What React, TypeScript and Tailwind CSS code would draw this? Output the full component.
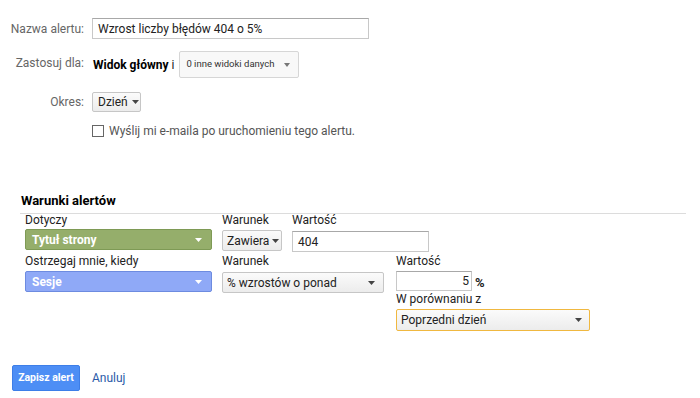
import React from "react";

const Caret = ({ color = "#444", w = 7 }: { color?: string; w?: number }) => (
  <svg width={w} height="4" viewBox="0 0 7 4" preserveAspectRatio="none" className="shrink-0">
    <polygon points="0,0 7,0 3.5,4" fill={color} />
  </svg>
);

const App = () => {
  return (
    <div className="w-[700px] h-[398px] bg-white font-[Roboto,Arial,sans-serif] text-[12px] text-[#222] overflow-hidden">
      {/* top form */}
      <div className="pt-[18px]">
        <div className="flex items-center h-[21px]">
          <div className="w-[84px] text-right text-[#666] mr-[8px]">Nazwa alertu:</div>
          <div className="w-[277px] h-[21px] border border-[#c8c8c8] border-t-[#a8a8a8] flex items-center px-[5px] text-[12px] text-[#222]">
            Wzrost liczby błędów 404 o 5%
          </div>
        </div>
        <div className="flex items-center h-[27px] mt-[12px]">
          <div className="w-[84px] text-right text-[#666] mr-[9px] -mt-[4px]">Zastosuj dla:</div>
          <span className="font-bold text-black text-[12px]">Widok główny</span>
          <span className="ml-[3px] text-[#222] text-[12px]">i</span>
          <div className="ml-[5px] w-[120px] h-[27px] border border-[#d6d6d6] rounded-[2px] bg-[#f8f8f8] flex items-center justify-between pl-[6px] pr-[8px] text-[9.5px] text-[#333] whitespace-nowrap">
            <span>0 inne widoki danych</span>
            <Caret color="#777" w={6} />
          </div>
        </div>
        <div className="flex items-center h-[20px] mt-[14px]">
          <div className="w-[84px] text-right text-[#666] mr-[8px]">Okres:</div>
          <div className="w-[49px] h-[20px] border border-[#c6c6c6] rounded-[2px] bg-gradient-to-b from-[#fbfbfb] to-[#ececec] flex items-center pl-[5px] gap-[4px] text-[12px] text-[#222]">
            <span>Dzień</span>
            <Caret />
          </div>
        </div>
        <div className="flex items-center h-[13px] mt-[12px] pl-[92px]">
          <div className="w-[12px] h-[12px] border border-[#666] bg-white" />
          <span className="ml-[5px] text-[#555]">Wyślij mi e-maila po uruchomieniu tego alertu.</span>
        </div>
      </div>

      {/* conditions */}
      <div className="mt-[55px] pl-[20px]">
        <div className="pl-[1px] font-bold text-[13px] text-black leading-[18px]">Warunki alertów</div>
        <div className="mt-[3px] w-[666px] h-px bg-[#dcdcdc]" />
      </div>

      <div className="pl-[25px]">
        <div className="flex">
          <div className="w-[187px]">
            <div className="h-[15px] leading-[13px]">Dotyczy</div>
            <div className="h-[21px] rounded-[2px] border border-[#7e9a55] bg-[#95ae6b] flex items-center justify-between pl-[6px] pr-[9px] text-white font-bold text-[12px]">
              <span>Tytuł strony</span>
              <Caret color="#fff" />
            </div>
          </div>
          <div className="ml-[10px] w-[60px]">
            <div className="h-[15px] leading-[13px]">Warunek</div>
            <div className="mt-[1px] h-[21px] border border-[#c6c6c6] rounded-[2px] bg-gradient-to-b from-[#fbfbfb] to-[#ececec] flex items-center pl-[4px] gap-[3px] text-[12px]">
              <span>Zawiera</span>
              <Caret />
            </div>
          </div>
          <div className="ml-[10px]">
            <div className="h-[15px] leading-[13px]">Wartość</div>
            <div className="mt-[2px] w-[137px] h-[21px] border border-[#c8c8c8] border-t-[#a8a8a8] flex items-center px-[5px] text-[12px]">404</div>
          </div>
        </div>

        <div className="flex">
          <div className="w-[187px]">
            <div className="h-[19px] leading-[18px]">Ostrzegaj mnie, kiedy</div>
            <div className="h-[21px] rounded-[2px] border border-[#6d8be0] bg-[#8fa9f7] flex items-center justify-between pl-[6px] pr-[9px] text-white font-bold text-[12px]">
              <span>Sesje</span>
              <Caret color="#fff" />
            </div>
          </div>
          <div className="ml-[10px] w-[162px]">
            <div className="h-[19px] leading-[18px]">Warunek</div>
            <div className="mt-[1px] h-[21px] border border-[#c6c6c6] rounded-[2px] bg-gradient-to-b from-[#fbfbfb] to-[#ececec] flex items-center justify-between pl-[4px] pr-[8px] text-[12px]">
              <span>% wzrostów o ponad</span>
              <Caret />
            </div>
          </div>
          <div className="ml-[12px]">
            <div className="h-[19px] leading-[18px]">Wartość</div>
            <div className="flex items-end">
              <div className="w-[76px] h-[20px] border border-[#c8c8c8] border-t-[#a8a8a8] flex items-center justify-end pr-[2px] text-[12px]">5</div>
              <span className="ml-[3px] font-bold text-[13px] leading-[16px]">%</span>
            </div>
            <div className="h-[18px] leading-[16px]">W porównaniu z</div>
            <div className="w-[194px] h-[22px] border border-[#f0b840] rounded-[2px] bg-gradient-to-b from-[#fbfbfb] to-[#ececec] flex items-center justify-between pl-[4px] pr-[7px] text-[12px]">
              <span>Poprzedni dzień</span>
              <Caret />
            </div>
          </div>
        </div>
      </div>

      {/* actions */}
      <div className="flex items-center mt-[34px] pl-[12px]">
        <button className="w-[68px] h-[26px] rounded-[2px] bg-[#4d8ef5] border border-[#3d7ee8] text-white font-bold text-[10.5px]">
          Zapisz alert
        </button>
        <span className="ml-[12px] text-[#2a5aa8] text-[12px]">Anuluj</span>
      </div>
    </div>
  );
};

export default App;
